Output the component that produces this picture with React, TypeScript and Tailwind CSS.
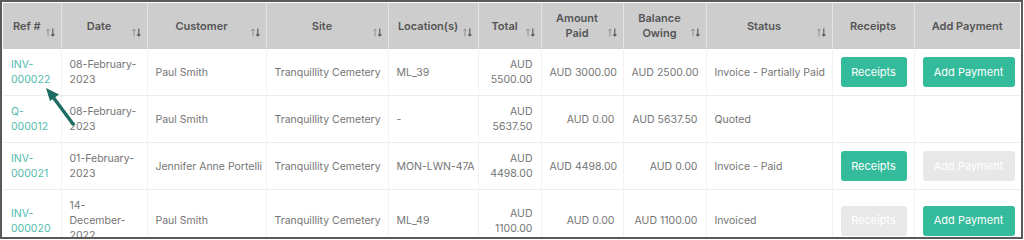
import React from 'react';

type Row = {
  ref: string[];
  date: string[];
  customer: string;
  site: string;
  location: string;
  total: string[];
  paid: string;
  owing: string;
  status: string;
  receipts: 'on' | 'off' | null;
  payment: 'on' | 'off' | null;
};

const rows: Row[] = [
  {
    ref: ['INV-', '000022'],
    date: ['08-February-', '2023'],
    customer: 'Paul Smith',
    site: 'Tranquillity Cemetery',
    location: 'ML_39',
    total: ['AUD', '5500.00'],
    paid: 'AUD 3000.00',
    owing: 'AUD 2500.00',
    status: 'Invoice - Partially Paid',
    receipts: 'on',
    payment: 'on',
  },
  {
    ref: ['Q-', '000012'],
    date: ['08-February-', '2023'],
    customer: 'Paul Smith',
    site: 'Tranquillity Cemetery',
    location: '-',
    total: ['AUD', '5637.50'],
    paid: 'AUD 0.00',
    owing: 'AUD 5637.50',
    status: 'Quoted',
    receipts: null,
    payment: null,
  },
  {
    ref: ['INV-', '000021'],
    date: ['01-February-', '2023'],
    customer: 'Jennifer Anne Portelli',
    site: 'Tranquillity Cemetery',
    location: 'MON-LWN-47A',
    total: ['AUD', '4498.00'],
    paid: 'AUD 4498.00',
    owing: 'AUD 0.00',
    status: 'Invoice - Paid',
    receipts: 'on',
    payment: 'off',
  },
  {
    ref: ['INV-', '000020'],
    date: ['14-', 'December-', '2022'],
    customer: 'Paul Smith',
    site: 'Tranquillity Cemetery',
    location: 'ML_49',
    total: ['AUD', '1100.00'],
    paid: 'AUD 0.00',
    owing: 'AUD 1100.00',
    status: 'Invoiced',
    receipts: 'off',
    payment: 'on',
  },
];

const cols: { label: string[]; w: string; sort: boolean }[] = [
  { label: ['Ref #'], w: 'w-[58px]', sort: true },
  { label: ['Date'], w: 'w-[86px]', sort: true },
  { label: ['Customer'], w: 'w-[119px]', sort: true },
  { label: ['Site'], w: 'w-[122px]', sort: true },
  { label: ['Location(s)'], w: 'w-[90px]', sort: true },
  { label: ['Total'], w: 'w-[63px]', sort: true },
  { label: ['Amount', 'Paid'], w: 'w-[82px]', sort: true },
  { label: ['Balance', 'Owing'], w: 'w-[83px]', sort: true },
  { label: ['Status'], w: 'w-[126px]', sort: true },
  { label: ['Receipts'], w: 'w-[82px]', sort: false },
  { label: ['Add Payment'], w: 'w-[106px]', sort: false },
];

function SortIcon() {
  return (
    <svg width="9" height="9" viewBox="0 0 9 9" className="absolute right-[6px] bottom-[12px]">
      <path d="M2 8.5V1M0.4 2.6L2 1l1.6 1.6" stroke="#8a8a8a" strokeWidth="0.9" fill="none" />
      <path d="M6.8 0.5V8M5.2 6.4L6.8 8l1.6-1.6" stroke="#555" strokeWidth="1.1" fill="none" />
    </svg>
  );
}

function Lines({ lines }: { lines: string[] }) {
  return (
    <>
      {lines.map((l, i) => (
        <div key={i}>{l}</div>
      ))}
    </>
  );
}

function Btn({ label, state, w }: { label: string; state: 'on' | 'off'; w: string }) {
  return (
    <button
      className={`${w} h-[30px] rounded-[3px] text-[11px] text-white ${
        state === 'on' ? 'bg-[#33bb9b]' : 'bg-[#e8e8e8]'
      }`}
    >
      {label}
    </button>
  );
}

export default function App() {
  return (
    <div
      className="relative w-[1023px] h-[239px] border-2 border-[#5a5a5a] p-px overflow-hidden bg-white"
      style={{ fontFamily: 'Inter, "Noto Sans", sans-serif' }}
    >
      <table className="table-fixed border-collapse w-[1017px] text-[10.5px] leading-[15px] text-[#757575]">
        <thead>
          <tr className="bg-[#cdcdcd]">
            {cols.map((c, i) => (
              <th
                key={i}
                className={`${c.w} relative h-[46px] py-2 pl-2 ${c.sort ? 'pr-[18px]' : 'pr-2'} border-l border-[#e4e4e4] first:border-l-0 text-center text-[11px] font-semibold text-[#555] align-middle`}
              >
                <Lines lines={c.label} />
                {c.sort && <SortIcon />}
              </th>
            ))}
          </tr>
        </thead>
        <tbody>
          {rows.map((r, i) => (
            <tr key={i} className="border-b border-[#ececec]">
              <td className="px-2 py-2 align-middle text-[#52bbae]">
                <Lines lines={r.ref} />
              </td>
              <td className="px-2 py-2 align-middle border-l border-[#f2f2f2]">
                <Lines lines={r.date} />
              </td>
              <td className="px-2 py-2 align-middle border-l border-[#f2f2f2] whitespace-nowrap">{r.customer}</td>
              <td className="px-2 py-2 align-middle border-l border-[#f2f2f2] whitespace-nowrap">{r.site}</td>
              <td className="px-2 py-2 align-middle border-l border-[#f2f2f2] whitespace-nowrap">{r.location}</td>
              <td className="px-2 py-2 align-middle border-l border-[#f2f2f2] text-right">
                <Lines lines={r.total} />
              </td>
              <td className="px-2 py-2 align-middle border-l border-[#f2f2f2] text-right whitespace-nowrap">{r.paid}</td>
              <td className="px-2 py-2 align-middle border-l border-[#f2f2f2] text-right whitespace-nowrap">{r.owing}</td>
              <td className="px-2 py-2 align-middle border-l border-[#f2f2f2] whitespace-nowrap">{r.status}</td>
              <td className="px-2 py-2 align-middle border-l border-[#f2f2f2]">
                {r.receipts && <Btn label="Receipts" state={r.receipts} w="w-[66px]" />}
              </td>
              <td className="px-2 py-2 align-middle border-l border-[#f2f2f2]">
                {r.payment && <Btn label="Add Payment" state={r.payment} w="w-[92px]" />}
              </td>
            </tr>
          ))}
        </tbody>
      </table>

      {/* annotation arrow */}
      <svg className="absolute left-[38px] top-[82px]" width="40" height="46" viewBox="0 0 40 46">
        <path d="M33 40L13 13" stroke="#1d6c63" strokeWidth="3.4" strokeLinecap="round" />
        <path d="M6 4L19 10.5L10 17Z" fill="#1d6c63" />
      </svg>
    </div>
  );
}
